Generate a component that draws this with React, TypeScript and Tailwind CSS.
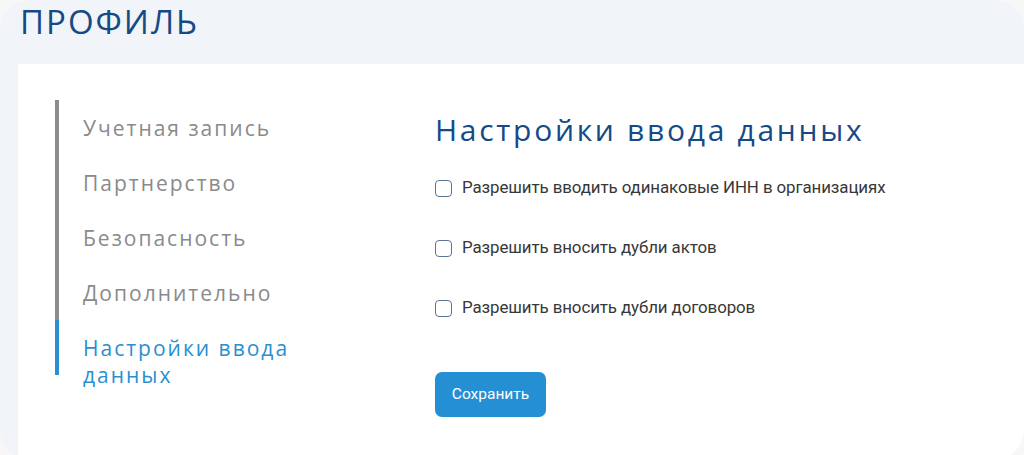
import React, { useState } from 'react';

const menu = ['Учетная запись', 'Партнерство', 'Безопасность', 'Дополнительно'];

const options = [
  'Разрешить вводить одинаковые ИНН в организациях',
  'Разрешить вносить дубли актов',
  'Разрешить вносить дубли договоров',
];

export default function App() {
  const [checked, setChecked] = useState<boolean[]>([false, false, false]);

  return (
    <div className="h-[455px] w-[1024px] overflow-hidden bg-[#f7f7f7]">
      <div className="flex h-[460px] flex-col overflow-hidden rounded-[30px] bg-[#f1f4f8]">
        {/* шапка */}
        <div className="h-[64px] shrink-0 pl-[20px] pt-[3px]">
          <h1 className="font-['Open_Sans',sans-serif] text-[33px] leading-[38px] tracking-[2px] text-[#164a86]">
            ПРОФИЛЬ
          </h1>
        </div>

        {/* карточка */}
        <div className="ml-[18px] flex flex-1 bg-white pt-[36px]">
          {/* боковое меню */}
          <div className="ml-[37px] flex w-[380px] shrink-0">
            <div className="flex w-[4px] shrink-0 flex-col">
              <div className="h-[220px] bg-[#8c8c8c]" />
              <div className="h-[55px] bg-[#2a8fd0]" />
            </div>
            <div className="flex flex-col gap-[28px] pl-[24px] pt-[15px] font-['Open_Sans',sans-serif] text-[21px] leading-[27px] tracking-[2px]">
              {menu.map((item) => (
                <div key={item} className="text-[#8a8a8a]">
                  {item}
                </div>
              ))}
              <div className="w-[250px] text-[#2a8fd0]">Настройки ввода данных</div>
            </div>
          </div>

          {/* настройки */}
          <div className="flex flex-col pt-[10px]">
            <h2 className="font-['Open_Sans',sans-serif] text-[30px] font-medium leading-[40px] tracking-[2.7px] text-[#164a86]">
              Настройки ввода данных
            </h2>
            <div className="mt-[26px] flex flex-col gap-[36px]">
              {options.map((label, i) => (
                <label key={label} className="flex h-[24px] cursor-pointer items-center gap-[10px]">
                  <input
                    type="checkbox"
                    checked={checked[i]}
                    onChange={() => setChecked(checked.map((c, j) => (j === i ? !c : c)))}
                    className="h-[17px] w-[17px] appearance-none rounded-[4px] border-[1.5px] border-[#5b7598] bg-white checked:bg-[#2490d3]"
                  />
                  <span className="font-['Roboto',sans-serif] text-[16.9px] tracking-[-0.1px] text-[#383838]">{label}</span>
                </label>
              ))}
            </div>
            <button className="mt-[52px] h-[45px] w-[111px] rounded-[7px] bg-[#2490d3] font-['Roboto',sans-serif] text-[15.5px] text-white">
              Сохранить
            </button>
          </div>
        </div>
      </div>
    </div>
  );
}
